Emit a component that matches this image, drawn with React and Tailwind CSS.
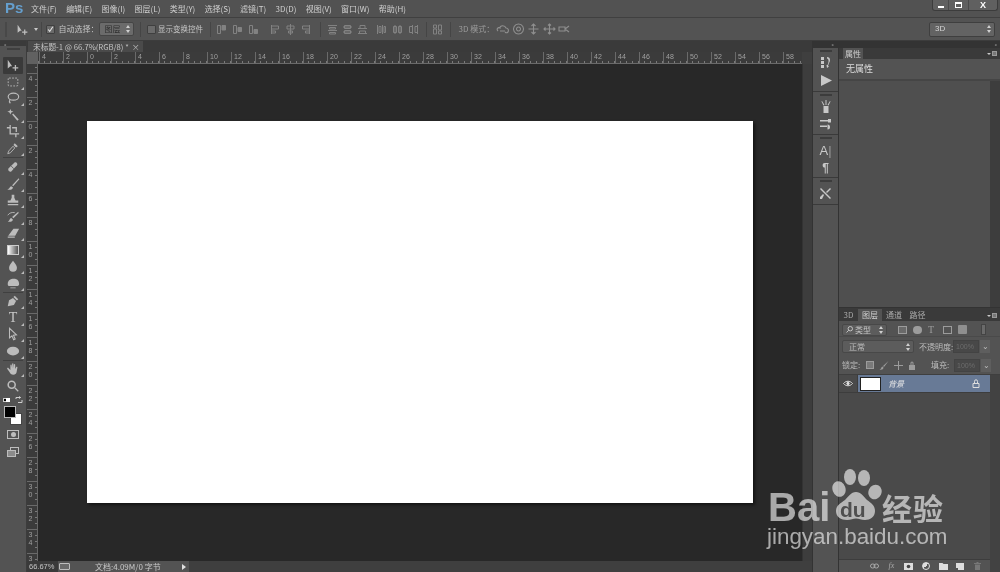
import React from 'react';

const menus = ['文件(F)', '编辑(E)', '图像(I)', '图层(L)', '类型(Y)', '选择(S)', '滤镜(T)', '3D(D)', '视图(V)', '窗口(W)', '帮助(H)'];
const hLabels = [4, 2, 0, 2, 4, 6, 8, 10, 12, 14, 16, 18, 20, 22, 24, 26, 28, 30, 32, 34, 36, 38, 40, 42, 44, 46, 48, 50, 52, 54, 56, 58];
const vLabels = [4, 2, 0, 2, 4, 6, 8, 10, 12, 14, 16, 18, 20, 22, 24, 26, 28, 30, 32, 34, 36];

// Small drawn glyphs for the tool column, all on a 16x16 box
const toolIcons = {
  move: <path d="M2 2v10l3-2.5 2 0L2 2zM10 8h1.500v2.500H14V12h-2.500v2.500H10V12H7.500v-1.500H10z" />,
  marquee: <rect x="2.500" y="3.500" width="11" height="9" rx="1" fill="none" stroke="currentColor" strokeDasharray="2 1.500" />,
  lasso: <g fill="none" stroke="currentColor" strokeWidth="1.300"><ellipse cx="8.500" cy="6.500" rx="6" ry="4" /><path d="M4.500 10c-1 1.500-.5 3 .5 4" /></g>,
  wand: <g><path d="M7 7.500l1.200-1.200 6.300 6.800-1.500 1.400z" /><path d="M5 1l1 2.500L8.500 4 6 5 5 7.500 4 5 1.500 4 4 3.500z" /></g>,
  crop: <path d="M4 1h1.500v9.500H15V12h-3v3h-1.500v-3H4V5H1V3.500h3zM7 3.500h5.500V9H11V5H7z" />,
  dropper: <g><path d="M10 2.500l3.500 3.500-2 1.500L8.500 4.500z" /><path d="M8 6L3 11.500 2 14.500l3-1L10 8z" fill="none" stroke="currentColor" /></g>,
  heal: <g><path d="M3 9.500L9.500 3c1.500-1.500 4.500 1 3 3L6 13c-2 1.500-4.500-1.500-3-3.500z" /><path d="M6 7l3 3" stroke="#535353" strokeWidth="1" /></g>,
  brush: <g><path d="M14.500 1.500L7 9.500l1.200 1.200 7-8z" /><path d="M6 10.500c-2 .5-1.500 3-4.500 3.500 3 1.500 6 .5 6.500-2z" /></g>,
  stamp: <path d="M6.500 2h3v3.500L11 8.500h3V11H2V8.500h3l1.500-3zM2 12.500h12V14H2z" />,
  history: <g><path d="M14 2L7 8l1.500 1.500 6-6z" /><path d="M6 9c-2 .5-1.500 3-4 4 3 1 5.500 0 6-2z" /><path d="M2 6c2-3 5-3.500 8-3" fill="none" stroke="currentColor" /></g>,
  eraser: <path d="M8.500 3H15l-4.500 8H2.500zM2 12h8v1.500H2z" />,
  drop: <path d="M8 2c2 3 4.500 5 4.500 8a4.500 4.500 0 0 1-9 0c0-3 2.500-5 4.500-8z" />,
  smudge: <path d="M2 9c0-4 3-6 7-6s6 2.500 6 6c0 1.500-1 2.500-3 2.500H4C2.500 11.500 2 10.500 2 9zM5 13h6v1H5z" />,
  pen: <g><path d="M10 2l4 4-1.500 1.500-4-4z" /><path d="M8 4.500L3.500 7 2 14l7-1.500L11.500 8z" /></g>,
  path: <path d="M4 1.500v11l2.800-2.500 2 4.500 1.700-.8-2-4.300 3.500-.4z" fill="none" stroke="currentColor" strokeWidth="1.200" />,
  ellipse: <ellipse cx="8" cy="8" rx="7" ry="5" />,
  hand: <path d="M5 4c0-1.500 1.500-1.500 1.500 0l.5 3V2.500c0-1.300 1.500-1.300 1.500 0V7l.5-4c.2-1.300 1.500-1 1.500.2V8l1-2c.7-1 1.800-.4 1.500.6L12 12c-.6 1.500-1.500 2.500-3.500 2.500-2.500 0-3.500-1-4.500-3L1.500 8c-.6-1 .6-1.800 1.500-1L5 9z" />,
  zoom: <g><circle cx="6.500" cy="6.500" r="4" fill="none" stroke="currentColor" strokeWidth="1.800" /><path d="M9.500 10.500l1-1 4 4-1 1z" /></g>,
};

// align / distribute buttons of the options bar: hollow part, filled part
const alignIcons = {
  top: ['M1.500 1.500h3v8h-3z', 'M6 1.500h3.500V6H6z'],
  vmid: ['M1.500 1.500h3v8h-3z', 'M6 3.500h3.500v4H6z'],
  bottom: ['M1.500 1.500h3v8h-3z', 'M6 5.500h3.500v4H6z'],
  left: ['M1.500 1v9M1.500 2h7v3h-7zM1.500 7h4v2h-4z', ''],
  hmid: ['M5.500 0v11M2 2h7v3H2zM3.500 7h4v2h-4z', ''],
  right: ['M9.500 1v9M2.500 2h7v3h-7zM5.500 7h4v2h-4z', ''],
  dTop: ['M1 1.500h9M1 6.500h9M2.500 3.500h6v1.500h-6zM2.500 8.500h6v1.500h-6z', ''],
  dMid: ['M1 3h9M1 8h9M2.500 1.500h6v3h-6zM2.500 6.500h6v3h-6z', ''],
  dBottom: ['M1 4.500h9M1 9.500h9M3 1.500h5v3H3zM2.500 7h6v2.500h-6z', ''],
  dLeft: ['M1.500 1v9M6.500 1v9M3 2.500h2v6H3zM8 2.500h1.500v6H8z', ''],
  dCenter: ['M3 1v9M8 1v9M1.500 2.500h3v6h-3zM6.500 2.500h3v6h-3z', ''],
  dRight: ['M4.500 1v9M9.500 1v9M1.500 2.500h3v6h-3zM7 2.500h2.500v6H7z', ''],
  auto: ['M1.500 1h3v3h-3zM1.500 5h3v5h-3zM6.500 1h3v5h-3zM6.500 7h3v3h-3z', ''],
};

function ToolIcon({ name, size = 14, corner = true }) {
  return (
    <span className="relative w-[16px] h-[16px] flex items-center justify-center text-[#bcbcbc]">
      <svg width={size} height={size} viewBox="0 0 16 16" fill="currentColor">{toolIcons[name]}</svg>
      {corner && <span className="absolute right-[-3px] bottom-0 w-0 h-0 border-l-[3px] border-l-transparent border-b-[3px] border-b-[#bbbbbb]" />}
    </span>
  );
}

function Tool({ name, active, children, corner = true }) {
  return (
    <div className={`h-[16.5px] mx-[3px] flex items-center justify-center ${active ? 'bg-[#3a3a3a] rounded-[1px]' : ''}`}>
      {children || <ToolIcon name={name} corner={corner} />}
    </div>
  );
}

const ToolSep = ({ className = 'my-[0.5px]' }) => <div className={`h-px mx-[3px] bg-[#404040] ${className}`} />;

function AlignIcon({ kind }) {
  const [line, solid] = alignIcons[kind];
  return (
    <svg width="11" height="11" viewBox="0 0 11 11" fill="none" stroke="#828282" className="shrink-0">
      <path d={line} />
      {solid && <path d={solid} fill="#828282" />}
    </svg>
  );
}

const OptSep = () => <div className="w-px h-[15px] bg-[#454545] shrink-0" />;

function Checkbox({ checked }) {
  return (
    <span className="w-[9px] h-[9px] rounded-[1px] bg-[#6a6a6a] border border-[#3f3f3f] flex items-center justify-center shrink-0">
      {checked && (
        <svg width="9" height="9" viewBox="0 0 9 9" fill="none" stroke="#e6e6e6" strokeWidth="1.400"><path d="M1.500 4.500l2 2.500 4-6" /></svg>
      )}
    </span>
  );
}

function UpDown() {
  return (
    <svg width="4" height="8" viewBox="0 0 4 8" fill="#d0d0d0" className="shrink-0"><path d="M2 0l2 3H0zM2 8L0 5h4z" /></svg>
  );
}

function Mode3d({ d }) {
  return (
    <svg width="13" height="12" viewBox="0 0 13 12" fill="none" stroke="#8f8f8f" strokeWidth="1.100" className="shrink-0">
      <path d={d} />
    </svg>
  );
}

function DockIcon({ children }) {
  return (
    <div className="h-[18px] flex items-center justify-center text-[#c8c8c8]">{children}</div>
  );
}

function DockGroup({ children, className = '' }) {
  return (
    <div className={`border-b border-[#3a3a3a] pt-[2px] ${className}`}>
      <div className="h-[2px] w-[12px] mx-auto bg-[#3c3c3c]" />
      {children}
    </div>
  );
}

function PanelMenuBtn() {
  return (
    <div className="flex items-center gap-px mr-[3px] mb-[3px]">
      <span className="w-0 h-0 border-x-[2px] border-x-transparent border-t-[2px] border-t-[#c8c8c8]" />
      <span className="w-[5px] h-[5px] bg-[#777777] border border-[#9a9a9a]" />
    </div>
  );
}

function FooterIcon({ children }) {
  return <span className="w-[17.200px] flex items-center justify-center text-[#a9a9a9] text-[8px]">{children}</span>;
}

function Watermark() {
  return (
    <div className="absolute left-[765px] top-[465px] w-[190px] h-[90px] text-white/60 pointer-events-none">
      <svg className="absolute left-[67px] top-[3px]" width="50" height="54" viewBox="0 0 50 54" fill="currentColor">
        <ellipse cx="7" cy="21" rx="6.500" ry="8" transform="rotate(-20 7 21)" />
        <ellipse cx="18" cy="9" rx="6" ry="8" />
        <ellipse cx="32" cy="10" rx="6" ry="8" />
        <ellipse cx="43" cy="24" rx="6.500" ry="7.500" transform="rotate(25 43 24)" />
        <path d="M24 24c5 0 7 4 11 8 4 3 8 5 8 11 0 6-5 9-10 9-4 0-6-1.500-9-1.500S19 52 15 52C9 52 4 49 4 43c0-6 5-8 9-11 3-3 6-8 11-8z" />
      </svg>
      <span className="absolute left-[75px] top-[35px] text-[21px] leading-[20px] font-bold text-[#4f4f4f] font-['Liberation_Sans',sans-serif]">du</span>
      <span className="absolute left-[3px] top-[27px] text-[40px] leading-[30px] font-bold font-['Liberation_Sans',sans-serif]">Bai</span>
      <span className="absolute left-[117px] top-[27px] text-[30px] leading-[30px] font-bold tracking-[1px]">经验</span>
      <span className="absolute left-[2px] top-[60px] text-[22.400px] leading-[24px] font-['Liberation_Sans',sans-serif]">jingyan.baidu.com</span>
    </div>
  );
}

export default function App() {
  return (
    <div className="relative w-[1000px] h-[572px] overflow-hidden flex flex-col bg-[#535353] text-[#c4c4c4] text-[8px] blur-[0.3px] font-['Noto_Sans_CJK_SC','Liberation_Sans',sans-serif]">
      {/* menu bar */}
      <div className="h-[18px] shrink-0 flex items-start border-b border-[#404040] bg-[#525252]">
        <span className="ml-[5px] w-[21px] mt-[-1px] text-[15px] leading-[18px] font-bold text-[#659fce] font-['Liberation_Sans',sans-serif]">Ps</span>
        <div className="ml-[5px] flex gap-[9.300px] h-[17px] items-center text-[#cfcfcf]">
          {menus.map((m) => <span key={m} className="whitespace-nowrap">{m}</span>)}
        </div>
        <div className="ml-auto mr-[2px] h-[11px] w-[66px] flex border border-t-0 border-[#3c3c3c] rounded-b-[3px] bg-[#606060]">
          <span className="w-[16px] flex items-end justify-center pb-[2px] border-r border-[#4a4a4a]"><span className="w-[6px] h-[2px] bg-white" /></span>
          <span className="w-[20px] flex items-center justify-center border-r border-[#4a4a4a]"><span className="w-[7px] h-[6px] border border-t-2 border-white" /></span>
          <span className="flex-1 flex items-center justify-center text-white text-[9px] leading-none font-bold font-['Liberation_Sans',sans-serif]">X</span>
        </div>
      </div>

      {/* options bar */}
      <div className="h-[23px] shrink-0 flex items-center border-b border-[#3c3c3c] pl-[5px]">
        <span className="w-[2px] h-[15px] bg-[#484848]" />
        <span className="ml-[9px] text-[#c0c0c0] flex"><svg width="13" height="13" viewBox="0 0 16 16" fill="currentColor">{toolIcons.move}</svg></span>
        <span className="ml-[5px] w-0 h-0 border-x-[2px] border-x-transparent border-t-[3px] border-t-[#c8c8c8]" />
        <span className="ml-[3px]"><OptSep /></span>
        <span className="ml-[4px]"><Checkbox checked /></span>
        <span className="ml-[3.500px] w-[40px] whitespace-nowrap">自动选择：</span>
        <div className="w-[35px] h-[14px] flex items-center justify-between px-[3px] rounded-[2px] bg-[#6b6b6b] border border-[#454545] text-[#2e2e2e]">
          <span className="ml-[2px]">图层</span><UpDown />
        </div>
        <span className="ml-[6px]"><OptSep /></span>
        <span className="ml-[6px]"><Checkbox /></span>
        <span className="ml-[2.500px] w-[45px] text-[7.500px] whitespace-nowrap">显示变换控件</span>
        <span className="ml-[6.500px]"><OptSep /></span>
        <div className="ml-[5.500px] flex gap-[5px]">{['top', 'vmid', 'bottom'].map((k) => <AlignIcon key={k} kind={k} />)}</div>
        <div className="ml-[11px] flex gap-[4px]">{['left', 'hmid', 'right'].map((k) => <AlignIcon key={k} kind={k} />)}</div>
        <span className="ml-[8.500px]"><OptSep /></span>
        <div className="ml-[6.500px] flex gap-[4px]">{['dTop', 'dMid', 'dBottom'].map((k) => <AlignIcon key={k} kind={k} />)}</div>
        <div className="ml-[8px] flex gap-[5px]">{['dLeft', 'dCenter', 'dRight'].map((k) => <AlignIcon key={k} kind={k} />)}</div>
        <span className="ml-[6.500px]"><OptSep /></span>
        <span className="ml-[5.500px]"><AlignIcon kind="auto" /></span>
        <span className="ml-[6.500px]"><OptSep /></span>
        <span className="ml-[8px] w-[36px] text-[#9c9c9c] whitespace-nowrap">3D 模式：</span>
        <div className="ml-[1.500px] flex gap-[2.500px]">
          <Mode3d d="M2 8c-2-2 0-4 2-3 0-3 5-3 6 0 2 0 3 2 2 4-1 1-2 1-3 0M4 8h5" />
          <Mode3d d="M6.500 1a5 5 0 1 0 .01 0zM6.500 4a2 2 0 1 0 .01 0z" />
          <Mode3d d="M6.500 1v10M1.500 6h10M4.500 3l2-2 2 2M4.500 9l2 2 2-2" />
          <Mode3d d="M6.500 1v10M1 6h11M5 2.500L6.500 1 8 2.500M5 9.500L6.500 11 8 9.500M2.500 4.500L1 6l1.500 1.500M10.500 4.500L12 6l-1.500 1.500" />
          <Mode3d d="M1 4h6v4H1zM7 6l4-3M7 6l4 3" />
        </div>
        <div className="ml-auto mr-[5px] w-[66px] h-[15px] flex items-center justify-between pl-[5px] pr-[3px] rounded-[2px] bg-[#636363] border border-[#3f3f3f] text-[#d4d4d4] font-['Liberation_Sans',sans-serif]">
          <span>3D</span><UpDown />
        </div>
      </div>

      {/* work area */}
      <div className="flex-1 min-h-0 flex">
        {/* tools */}
        <div className="w-[27px] shrink-0 flex flex-col bg-[#535353] border-r border-[#3c3c3c]">
          <div className="h-[5px] bg-[#3a3a3a] flex items-center pl-[4px] text-[#aaaaaa] text-[5px] leading-none">»</div>
          <div className="h-[2px] w-[13px] mx-auto mt-[2px] bg-[#3f3f3f]" />
          <div className="h-[7px]" />
          <Tool name="move" active corner={false} />
          <Tool name="marquee" />
          <Tool name="lasso" />
          <Tool name="wand" />
          <Tool name="crop" />
          <Tool name="dropper" />
          <ToolSep className="my-px" />
          <Tool name="heal" />
          <Tool name="brush" />
          <Tool name="stamp" />
          <Tool name="history" />
          <Tool name="eraser" />
          <Tool>
            <span className="relative w-[16px] h-[16px] flex items-center justify-center">
              <span className="w-[12px] h-[10px] bg-gradient-to-r from-white to-[#555555] border border-[#cccccc]" />
              <span className="absolute right-[-3px] bottom-0 w-0 h-0 border-l-[3px] border-l-transparent border-b-[3px] border-b-[#bbbbbb]" />
            </span>
          </Tool>
          <Tool name="drop" />
          <Tool name="smudge" />
          <ToolSep />
          <Tool name="pen" />
          <Tool>
            <span className="relative w-[16px] h-[16px] flex items-center justify-center text-[#c8c8c8] text-[14px] leading-none font-['Liberation_Serif',serif]">
              T
              <span className="absolute right-[-3px] bottom-0 w-0 h-0 border-l-[3px] border-l-transparent border-b-[3px] border-b-[#bbbbbb]" />
            </span>
          </Tool>
          <Tool name="path" />
          <Tool name="ellipse" />
          <ToolSep />
          <Tool name="hand" />
          <Tool name="zoom" corner={false} />
          <div className="h-[10px] mt-[1px] px-[3px] flex items-center justify-between">
            <span className="flex items-end">
              <span className="w-[4px] h-[4px] bg-black border border-[#cccccc]" />
              <span className="w-[4px] h-[4px] bg-white ml-[-1px]" />
            </span>
            <svg width="8" height="8" viewBox="0 0 8 8" fill="none" stroke="#cfcfcf"><path d="M1 3V1.500h4.500M4 .5l1.500 1L4 2.500M7 4v2.500H3" /></svg>
          </div>
          {/* colour chips */}
          <div className="h-[19px] pl-[4px] pt-[1px]">
            <div className="relative w-[18px] h-[19px]">
              <span className="absolute right-0 bottom-0 w-[12px] h-[12px] bg-white border border-[#444444]" />
              <span className="absolute left-0 top-0 w-[12px] h-[12px] bg-black border border-[#b8b8b8]" />
            </div>
          </div>
          <div className="h-[5.500px]" />
          <div className="h-[10px] flex justify-center">
            <span className="w-[12px] h-[9px] border border-[#bdbdbd] flex items-center justify-center"><span className="w-[5px] h-[5px] rounded-full bg-[#bdbdbd]" /></span>
          </div>
          <div className="h-[7px]" />
          <div className="h-[10px] flex justify-center">
            <span className="relative w-[12px] h-[10px]">
              <span className="absolute right-0 top-0 w-[9px] h-[7px] border border-[#bdbdbd]" />
              <span className="absolute left-0 bottom-0 w-[9px] h-[7px] border border-[#bdbdbd] bg-[#8c8c8c]" />
            </span>
          </div>
        </div>

        {/* document */}
        <div className="w-[785px] shrink-0 flex flex-col bg-[#3a3a3a]">
          <div className="h-[11px] shrink-0 flex items-end bg-[#3a3a3a]">
            <div className="ml-[1px] h-[11px] w-[115px] bg-[#4a4a4a] flex items-center pl-[5px] text-[7.700px] text-[#c4c4c4] whitespace-nowrap">
              <span>未标题-1 @ 66.7%(RGB/8) *</span>
              <span className="ml-[3px] text-[8px] leading-none text-[#bbbbbb]">×</span>
            </div>
          </div>
          <div className="h-[12px] shrink-0 flex">
            <div className="w-[11px] shrink-0 bg-[#616161]" />
            <div className="flex-1 flex overflow-hidden pl-px bg-[#3b3b3b] border-b border-[#6a6a6a] bg-[repeating-linear-gradient(90deg,#7a7a7a_0_1px,transparent_1px_6px)] bg-[length:100%_2px] bg-bottom bg-no-repeat">
              {hLabels.map((n, i) => (
                <span key={i} className="w-[24px] shrink-0 h-full border-l border-[#6a6a6a] pl-[2px] text-[7px] leading-[10px] text-[#a0a0a0] font-['Liberation_Sans',sans-serif]">{n}</span>
              ))}
            </div>
            <div className="w-[10px] shrink-0 bg-[#3f3f3f]" />
          </div>
          <div className="flex-1 min-h-0 flex">
            <div className="w-[11px] shrink-0 overflow-hidden pt-[9px] bg-[#3b3b3b] border-r border-[#666666] bg-[linear-gradient(180deg,#7a7a7a_0_1px,transparent_1px)] bg-[length:2px_6px] bg-[position:right_3px] bg-repeat-y">
              {vLabels.map((n, i) => (
                <div key={i} className="h-[24px] border-t border-[#6a6a6a] pl-[1.500px] pt-px text-[7px] leading-[7.500px] text-[#a0a0a0] font-['Liberation_Sans',sans-serif]">
                  {String(n).split('').map((c, j) => <div key={j}>{c}</div>)}
                </div>
              ))}
            </div>
            <div className="flex-1 min-w-0 bg-[#282828] pl-[49px] pt-[57px]">
              <div className="w-[666px] h-[382px] bg-white shadow-[2px_2px_3px_rgba(0,0,0,0.5)]" />
            </div>
            <div className="w-[10px] shrink-0 bg-[#3d3d3d] border-l border-[#333333]" />
          </div>
          <div className="h-[11px] shrink-0 flex items-center bg-[#3a3a3a] text-[8px] leading-none">
            <span className="w-[31px] shrink-0 pl-[2px] text-[#c4c4c4] font-['Liberation_Sans',sans-serif] text-[7.500px]">66.67%</span>
            <div className="w-[131px] h-full bg-[#535353] flex items-center">
              <span className="ml-[1px] w-[11px] h-[7px] border border-[#bdbdbd] rounded-[1px] bg-[#6a6a6a]" />
              <span className="ml-[25px] text-[#c9c9c9] whitespace-nowrap">文档:4.09M/0 字节</span>
              <span className="ml-auto mr-[3px] w-0 h-0 border-y-[3px] border-y-transparent border-l-[4px] border-l-[#e0e0e0]" />
            </div>
            <div className="flex-1 h-full bg-[#3f3f3f]" />
          </div>
        </div>

        {/* icon dock */}
        <div className="w-[27px] shrink-0 flex flex-col bg-[#535353] border-x border-[#333333]">
          <div className="h-[7px] bg-[#333333] flex justify-end pr-[4px] text-[5px] leading-[6px] text-[#aaaaaa]">«</div>
          <DockGroup className="pb-[2px]">
            <div className="h-px" />
            <DockIcon>
              <svg width="12" height="13" viewBox="0 0 12 13" fill="currentColor"><path d="M1 1h3v3H1zM1 5h3v3H1zM1 9h3v3H1z" /><path d="M7 1c3 0 4 3 2 6l-1 3 1 .5-2 1.500-.5-3L7.500 9C9 6 9 3 7 2.500z" /></svg>
            </DockIcon>
            <DockIcon>
              <svg width="12" height="11" viewBox="0 0 12 11" fill="currentColor"><path d="M1 0l11 5.500L1 11z" /></svg>
            </DockIcon>
          </DockGroup>
          <DockGroup className="pb-px">
            <div className="h-px" />
            <DockIcon>
              <svg width="12" height="14" viewBox="0 0 12 14" fill="currentColor"><path d="M3.500 7h5v7h-5zM5.500 1h1v5h-1zM2 2l2.500 4-1 .5-2-4zM10 2L7.500 6l1 .5 2-4z" /></svg>
            </DockIcon>
            <DockIcon>
              <svg width="13" height="12" viewBox="0 0 13 12" fill="currentColor"><path d="M1 2h8v1.500H1zM9 1h3v3.500H9zM1 7.500h7V9H1zM8.500 6.500a2.500 2.500 0 1 1 0 5z" /></svg>
            </DockIcon>
          </DockGroup>
          <DockGroup>
            <div className="h-[2px]" />
            <DockIcon><span className="text-[13px] leading-none font-['Liberation_Sans',sans-serif]">A<span className="font-light text-[#999999]">|</span></span></DockIcon>
            <DockIcon><span className="text-[12px] leading-none font-bold font-['Liberation_Sans',sans-serif]">¶</span></DockIcon>
          </DockGroup>
          <DockGroup className="pb-[2px]">
            <div className="h-[2px]" />
            <DockIcon>
              <svg width="13" height="13" viewBox="0 0 13 13" fill="currentColor"><path d="M1 2l1-1 10 10-1 1zM12 2l-1-1-4 4 1 1zM5 8L4 7 1 10v2h2z" /></svg>
            </DockIcon>
          </DockGroup>
        </div>

        {/* panels */}
        <div className="flex-1 min-w-0 flex flex-col bg-[#333333]">
          <div className="h-[7px] flex justify-end pr-[3px] text-[5px] leading-[6px] text-[#aaaaaa]">»</div>
          <div className="h-[11px] shrink-0 flex items-end justify-between pl-[4px] bg-[#3a3a3a]">
            <span className="w-[20px] h-[11px] text-center leading-[11px] bg-[#535353] text-[#cfcfcf]">属性</span>
            <PanelMenuBtn />
          </div>
          <div className="h-[249px] shrink-0 flex flex-col bg-[#4f4f4f] border-b border-[#333333]">
            <div className="h-[22px] shrink-0 flex items-center pl-[7px] border-b-2 border-[#454545] bg-[#535353] text-[9px] text-[#dcdcdc]">无属性</div>
            <div className="flex-1 flex">
              <div className="flex-1" />
              <div className="w-[10px] bg-[#3d3d3d]" />
            </div>
          </div>
          <div className="h-[13px] shrink-0 flex items-end justify-between bg-[#3a3a3a] text-[#a9a9a9]">
            <div className="flex h-[12px] leading-[12px] text-center text-[8px]">
              <span className="w-[19px]">3D</span>
              <span className="w-[24px] bg-[#535353] text-[#cfcfcf]">图层</span>
              <span className="w-[24px]">通道</span>
              <span className="w-[23px]">路径</span>
            </div>
            <PanelMenuBtn />
          </div>
          <div className="flex-1 min-h-0 flex flex-col bg-[#424242]">
            <div className="h-[16px] shrink-0 flex items-center bg-[#535353] pl-[3px] pt-[2px] border-b border-[#4a4a4a]">
              <div className="w-[45px] h-[12px] flex items-center rounded-[2px] bg-[#5c5c5c] border border-[#484848] px-[3px] text-[#c4c4c4]">
                <svg width="7" height="7" viewBox="0 0 7 7" fill="none" stroke="#c4c4c4"><circle cx="4.300" cy="2.700" r="2.200" /><path d="M2.800 4.200L.5 6.500" /></svg>
                <span className="ml-[2px] flex-1">类型</span><UpDown />
              </div>
              <div className="ml-[11px] flex items-center gap-[6px] text-[#9c9c9c]">
                <span className="w-[9px] h-[8px] border border-[#9c9c9c] bg-[#6a6a6a]" />
                <span className="w-[9px] h-[8px] rounded-full bg-[#9c9c9c]" />
                <span className="w-[9px] text-[10px] leading-none font-['Liberation_Serif',serif]">T</span>
                <span className="w-[9px] h-[8px] border border-[#9c9c9c]" />
                <span className="w-[9px] h-[9px] bg-[#8f8f8f] rounded-[1px]" />
              </div>
              <span className="ml-[14px] w-[5px] h-[11px] bg-[#6a6a6a] border border-[#444444]" />
            </div>
            <div className="h-[19px] shrink-0 flex items-center bg-[#535353] pl-[3px] text-[#bdbdbd]">
              <div className="w-[72px] h-[13px] flex items-center justify-between rounded-[2px] bg-[#5c5c5c] border border-[#484848] px-[3px]">
                <span className="ml-[3px]">正常</span><UpDown />
              </div>
              <span className="ml-[5px] w-[33px] whitespace-nowrap text-[8px]">不透明度:</span>
              <span className="ml-[1px] w-[26px] h-[13px] bg-[#484848] border border-[#434343] text-[7px] leading-[11px] pl-[2px] text-[#6c6c6c] font-['Liberation_Sans',sans-serif]">100%</span>
              <span className="ml-[1px] w-[10px] h-[13px] bg-[#5e5e5e] text-center text-[8px] leading-[11px]">⌄</span>
            </div>
            <div className="h-[19px] shrink-0 flex items-center bg-[#535353] pl-[3px] border-b border-[#3f3f3f] text-[#bdbdbd]">
              <span className="w-[22px] text-[8px]">锁定:</span>
              <div className="ml-[2px] flex items-center gap-[5px] text-[#9c9c9c]">
                <span className="w-[8px] h-[8px] bg-[#7a7a7a] border border-[#9c9c9c]" />
                <svg width="10" height="9" viewBox="0 0 10 9" fill="currentColor"><path d="M9.500 0L4 5l1 1zM3.500 5.500C2 6 2.500 8 .5 8.500c2 .5 4 0 4-2z" /></svg>
                <svg width="9" height="9" viewBox="0 0 9 9" fill="none" stroke="currentColor"><path d="M4.500 0v9M0 4.500h9" /></svg>
                <svg width="8" height="9" viewBox="0 0 8 9" fill="currentColor"><path d="M1 4h6v5H1zM2.500 4V2a1.500 1.500 0 0 1 3 0v2h-1V2a.5.5 0 0 0-1 0v2z" /></svg>
              </div>
              <span className="ml-[15px] w-[21px] text-[8px] whitespace-nowrap">填充:</span>
              <span className="ml-[2px] w-[26px] h-[13px] bg-[#484848] border border-[#434343] text-[7px] leading-[11px] pl-[2px] text-[#6c6c6c] font-['Liberation_Sans',sans-serif]">100%</span>
              <span className="ml-[1px] w-[10px] h-[13px] bg-[#5e5e5e] text-center text-[8px] leading-[11px]">⌄</span>
            </div>
            {/* layer list with its scrollbar on the right */}
            <div className="flex-1 min-h-0 flex flex-col mr-[10px] bg-[#4a4a4a]">
              <div className="h-[18px] shrink-0 flex border-b border-[#3d3d3d]">
                <span className="w-[19px] flex items-center justify-center border-r border-[#3d3d3d]">
                  <svg width="10" height="7" viewBox="0 0 10 7" fill="none" stroke="#dddddd"><path d="M.5 3.500C3 .5 7 .5 9.500 3.500 7 6.500 3 6.500.5 3.500z" /><circle cx="5" cy="3.500" r="1.200" fill="#dddddd" /></svg>
                </span>
                <div className="flex-1 flex items-center bg-[#687a96]">
                  <span className="ml-[2px] w-[21px] h-[14px] bg-white border border-[#222222]" />
                  <span className="ml-[7px] italic text-[8px] text-[#e8e8e8]">背景</span>
                  <svg className="ml-auto mr-[10px]" width="8" height="9" viewBox="0 0 8 9" fill="none" stroke="#dddddd"><path d="M1 4.500h6v4H1zM2.500 4.500V2.300a1.500 1.500 0 0 1 3 0v2.200" /></svg>
                </div>
              </div>
              <div className="flex-1" />
              <div className="h-[13px] shrink-0 flex items-center justify-end pr-[4px] bg-[#535353] border-t border-[#3d3d3d]">
                <FooterIcon><svg width="9" height="6" viewBox="0 0 9 6" fill="none" stroke="currentColor"><rect x=".5" y="1" width="4.500" height="4" rx="2" /><rect x="4" y="1" width="4.500" height="4" rx="2" /></svg></FooterIcon>
                <FooterIcon><span className="italic font-['Liberation_Serif',serif]">fx</span></FooterIcon>
                <FooterIcon><svg width="9" height="7" viewBox="0 0 9 7"><rect width="9" height="7" fill="#dddddd" /><circle cx="4.500" cy="3.500" r="1.800" fill="#444444" /></svg></FooterIcon>
                <FooterIcon><span className="w-[8px] h-[8px] rounded-full bg-[linear-gradient(135deg,#dddddd_50%,#555555_50%)] border border-[#dddddd]" /></FooterIcon>
                <FooterIcon><svg width="9" height="7" viewBox="0 0 9 7" fill="#dddddd"><path d="M0 0h3.500l1 1H9v6H0z" /></svg></FooterIcon>
                <FooterIcon><svg width="8" height="8" viewBox="0 0 8 8" fill="#dddddd"><path d="M0 1h5l3 0v7H2V6H0z" /></svg></FooterIcon>
                <FooterIcon><svg width="7" height="8" viewBox="0 0 7 8" fill="#777777"><path d="M0 1h7v1H0zM1 2.500h5V8H1zM2.500 0h2v1h-2z" /></svg></FooterIcon>
              </div>
            </div>
          </div>
        </div>
      </div>

      <Watermark />
    </div>
  );
}
